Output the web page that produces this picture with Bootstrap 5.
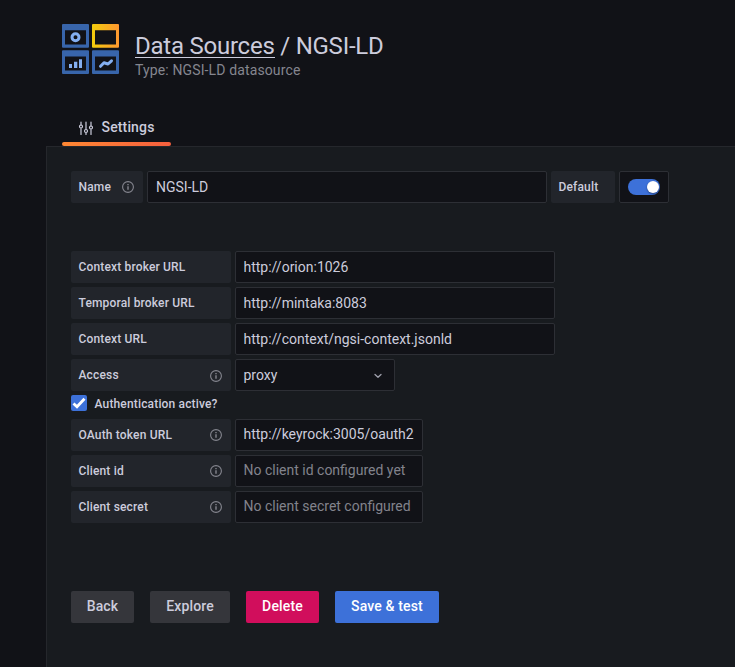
<!DOCTYPE html>
<html lang="en" data-bs-theme="dark">
<head>
<meta charset="utf-8">
<meta name="viewport" content="width=device-width, initial-scale=1">
<title>Data Sources / NGSI-LD</title>
<link href="https://cdn.jsdelivr.net/npm/bootstrap@5.3.0/dist/css/bootstrap.min.css" rel="stylesheet">
<style>
body{background:#111217;color:#ccccdc;font:400 14px/22px Roboto,"Liberation Sans",sans-serif;letter-spacing:.15px;height:667px;overflow:hidden}
.page-head{padding:24px 0 0 62px;height:110px}
.page-title{font-size:24px;line-height:28px;font-weight:400;letter-spacing:-.24px;margin:8px 0 0;color:#ccccdc}
.page-title a{color:inherit;text-decoration:none;border-bottom:1px solid #ccccdc;display:inline-block;line-height:22px}
.page-sub{color:#85868f;line-height:20px;letter-spacing:.13px}
.tab-row{margin-left:62px;height:36px}
.tab-item{width:109px;height:36px;padding:0 0 2px 16px;font-weight:500;letter-spacing:.15px;position:relative;color:#ccccdc}
.tab-item::after{content:"";position:absolute;left:0;right:0;bottom:0;height:4px;border-radius:2px;background:linear-gradient(90deg,#ff8833,#f55f3e)}
.tab-item svg{margin:2px 7.5px 0 0}
.panel{margin-left:46px;height:521px;background:#181b1f;border:1px solid #25272c;border-width:1px 0 0 1px;padding:24px 0 0 24px}
.field-label{height:32px;background:#22252b;border-radius:2px;padding:0 9px 0 7.5px;font-size:12px;font-weight:500;color:#ccccdc;width:160px;letter-spacing:.16px}
.field-label svg{color:#85868f}
.info-low{margin-top:2px}
.field-box.form-control{height:32px;border:1px solid #2d2f35;border-radius:2px;background:#111217;color:#ccccdc;font-size:14px;line-height:22px;padding:0 7.5px;letter-spacing:0;box-shadow:none}
.field-box.form-control::placeholder{color:#82838c;opacity:1}
.w-name{width:72px}.w-default{width:64px}
.field-box.f-name{width:400px;padding-left:8px}.field-box.f-url{width:320px}.field-box.f-select{width:160px;padding-right:10px}
.field-box.f-auth{width:188px;padding-bottom:2px}
.field-box.f-switch{width:50px}
.toggle{width:32px;height:16px;border-radius:8px;background:#3d71d9;padding:0 1px}
.knob{width:12px;height:12px;border-radius:50%;background:#fff;box-shadow:0 1px 2px #0006}
.auth-row{height:24px;font-size:12px;font-weight:500;padding-top:1px;letter-spacing:.16px}
.tick{width:16px;height:16px;background:#3d71d9;border-radius:2px;margin:-1px 7.5px 0 0}
.row-gap{gap:4px}
.actions{margin-top:68px}
.actions .btn{height:32px;border:0;border-radius:2px;font-size:14px;font-weight:500;line-height:30px;padding:0 0 2px;letter-spacing:.15px;color:#ccccdc;background:#35363b}
.actions .btn.b-delete{background:#d10e5c;color:#fff}
.actions .btn.b-save{background:#3d71d9;color:#fff}
.b-back{width:63px}.b-explore{width:80px}.b-delete{width:73px}.b-save{width:104px}
</style>
<script src="https://cdn.jsdelivr.net/npm/bootstrap@5.3.0/dist/js/bootstrap.bundle.min.js"></script>
</head>
<body>
<svg class="d-none">
<symbol id="info" viewBox="0 0 12 12"><circle cx="6" cy="6" r="5.4" fill="none" stroke="currentColor" stroke-width="1.1"/><path d="M6 5.3v3.5M6 3.1v1.2" stroke="currentColor" stroke-width="1.4"/></symbol>
</svg>
<header class="page-head d-flex">
<svg width="57" height="50" viewBox="0 0 57 50" class="flex-shrink-0">
<defs><linearGradient id="gold"><stop offset="0" stop-color="#f2cc0c"/><stop offset="1" stop-color="#ff9830"/></linearGradient></defs>
<g fill="#3865ab" fill-rule="evenodd">
<path d="M1 0h25q1 0 1 1v21.700q0 1-1 1H1q-1 0-1-1V1q0-1 1-1zM3 6.200v14.200h21V6.200z"/>
<path d="M1 26.300h25q1 0 1 1V49q0 1-1 1H1q-1 0-1-1V27.300q0-1 1-1zM3 32.400v14.200h21V32.400z"/>
<path d="M31 26.300h25q1 0 1 1V49q0 1-1 1H31q-1 0-1-1V27.300q0-1 1-1zM33 32.400v14.200h21V32.400z"/>
<path fill="url(#gold)" d="M31 0h25q1 0 1 1v21.700q0 1-1 1H31q-1 0-1-1V1q0-1 1-1zM33 6.200v14.200h21V6.200z"/></g>
<circle cx="13.500" cy="13.300" r="3.500" fill="none" stroke="#84aff1" stroke-width="3"/>
<path d="M7 40h3v4H7zM12 37.700h3.300V44H12zM17 35.300h3V44h-3z" fill="#84aff1"/>
<path d="M38.500 42.300l3.500-3.500 4 1.200L49.500 36.800" fill="none" stroke="#84aff1" stroke-width="3" stroke-linecap="round" stroke-linejoin="round"/>
</svg>
<div class="ms-3">
<h1 class="page-title"><a href="#">Data Sources</a> / NGSI-LD</h1>
<div class="page-sub">Type: NGSI-LD datasource</div>
</div>
</header>
<nav class="tab-row d-flex"><a class="tab-item d-flex align-items-center text-decoration-none" href="#">
<svg width="16" height="16" viewBox="0 0 16 16" fill="none" stroke="currentColor" stroke-width="1.2" stroke-linecap="round"><path d="M3 2v3M3 8.500v6M8 2v7M8 13v1.500M13 2v4M13 9.500v5"/><circle cx="3" cy="6.500" r="1.500"/><circle cx="8" cy="11" r="1.500"/><circle cx="13" cy="7.500" r="1.500"/></svg><span>Settings</span></a></nav>
<main class="panel">
<div class="d-flex row-gap mb-5">
<label class="field-label w-name d-flex align-items-center justify-content-between">Name<svg width="12" height="12"><use href="#info"/></svg></label>
<input class="form-control field-box f-name" value="NGSI-LD">
<label class="field-label w-default d-flex align-items-center">Default</label>
<div class="form-control field-box f-switch d-flex align-items-center"><div class="toggle d-flex align-items-center justify-content-end"><div class="knob"></div></div></div>
</div>
<div class="d-flex flex-column row-gap">
<div class="d-flex row-gap"><label class="field-label d-flex align-items-center">Context broker URL</label><input class="form-control field-box f-url" value="http://orion:1026"></div>
<div class="d-flex row-gap"><label class="field-label d-flex align-items-center">Temporal broker URL</label><input class="form-control field-box f-url" value="http://mintaka:8083"></div>
<div class="d-flex row-gap"><label class="field-label d-flex align-items-center">Context URL</label><input class="form-control field-box f-url" value="http://context/ngsi-context.jsonld"></div>
<div class="d-flex row-gap"><label class="field-label d-flex align-items-center justify-content-between">Access<svg width="12" height="12" class="info-low"><use href="#info"/></svg></label><div class="form-control field-box f-select d-flex align-items-center justify-content-between">proxy<svg width="12" height="12" viewBox="0 0 12 12" fill="none" stroke="#a0a1ad" stroke-width="1.300" stroke-linecap="round" stroke-linejoin="round"><path d="M3 5.500l3 2.800 3-2.800"/></svg></div></div>
</div>
<div class="auth-row d-flex align-items-center"><span class="tick d-flex"><svg width="16" height="16" viewBox="0 0 16 16"><path d="M2.500 8.500l3.500 3.300 7.500-8" fill="none" stroke="#fff" stroke-width="2.800"/></svg></span>Authentication active?</div>
<div class="d-flex flex-column row-gap pt-1">
<div class="d-flex row-gap"><label class="field-label d-flex align-items-center justify-content-between">OAuth token URL<svg width="12" height="12"><use href="#info"/></svg></label><input class="form-control field-box f-auth" value="http://keyrock:3005/oauth2"></div>
<div class="d-flex row-gap"><label class="field-label d-flex align-items-center justify-content-between">Client id<svg width="12" height="12"><use href="#info"/></svg></label><input class="form-control field-box f-auth" placeholder="No client id configured yet"></div>
<div class="d-flex row-gap"><label class="field-label d-flex align-items-center justify-content-between">Client secret<svg width="12" height="12"><use href="#info"/></svg></label><input class="form-control field-box f-auth" placeholder="No client secret configured"></div>
</div>
<div class="actions d-flex gap-3">
<button class="btn b-back">Back</button><button class="btn b-explore">Explore</button><button class="btn b-delete">Delete</button><button class="btn b-save">Save &amp; test</button>
</div>
</main>
</body>
</html>
